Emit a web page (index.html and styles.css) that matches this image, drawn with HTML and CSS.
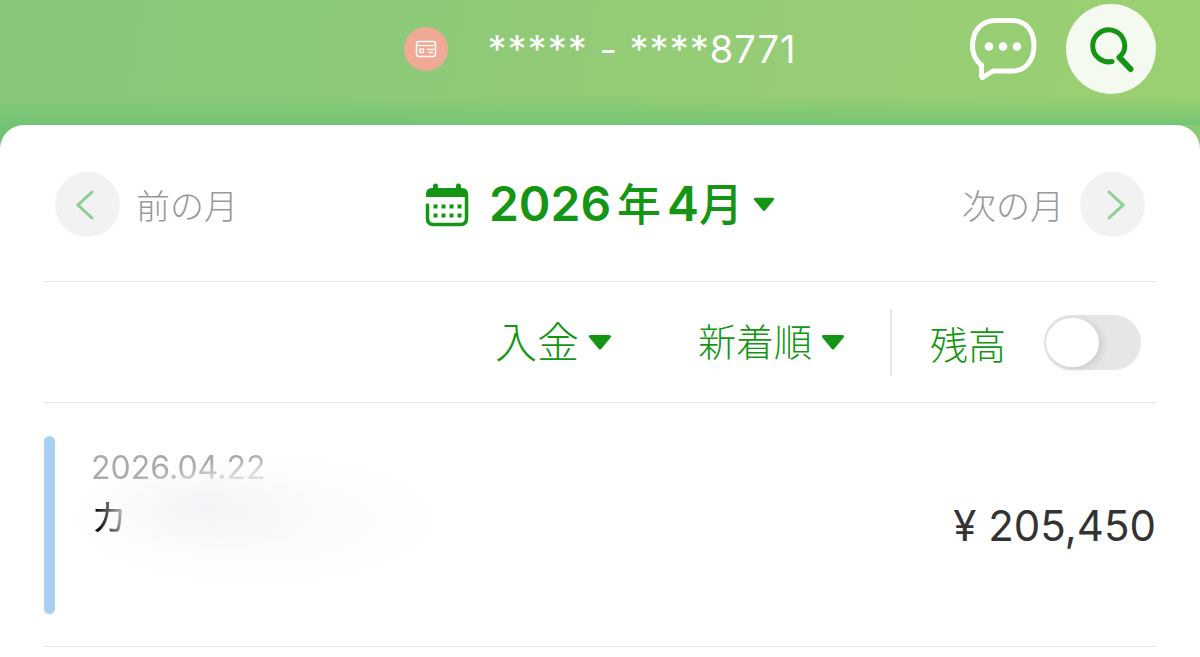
FILE: index.html
```
<!DOCTYPE html>
<html lang="ja">
<head>
  <meta charset="UTF-8">
  <meta name="viewport" content="width=device-width, initial-scale=1.0">
  <title>入出金明細</title>
  <link rel="stylesheet" href="styles.css">
</head>
<body>
  <header class="header">
    <div class="account">
      <span class="account-icon">
        <svg width="22" height="18" viewBox="0 0 22 18" fill="none" stroke="#fff" stroke-width="1.500">
          <rect x="1.500" y="1.500" width="19" height="15" rx="2.500"/>
          <path d="M2 5.500h18" stroke-width="1.200"/>
          <rect x="5" y="9" width="3.500" height="3.500" stroke-width="1.300"/>
          <path d="M12 9.500h7M13.500 12.500h4.500" stroke-width="1.300"/>
        </svg>
      </span>
      <span class="account-number">***** - ****8771</span>
    </div>
    <div class="header-actions">
      <button class="chat-button" aria-label="チャット">
        <svg width="68" height="64" viewBox="0 0 68 64">
          <path d="M27 3.500H43C56 3.500 65 13 65 28.500S56 54 43 54H24L14.500 60Q12.500 61.500 12.500 59V48C6 43 3.500 37 3.500 29C3.500 13 13 3.500 27 3.500Z" fill="none" stroke="#fff" stroke-width="5" stroke-linejoin="round"/>
          <g fill="#fff"><circle cx="20" cy="29.500" r="4.300"/><circle cx="34" cy="29.500" r="4.300"/><circle cx="48" cy="29.500" r="4.300"/></g>
        </svg>
      </button>
      <button class="search-button" aria-label="検索">
        <svg width="90" height="90" viewBox="0 0 90 90" fill="none" stroke="#149614" stroke-width="5" stroke-linecap="round" stroke-linejoin="round">
          <path d="M46 57.500A16 16 0 1 1 57.500 48L53.500 53.500"/>
          <path d="M53.500 53.500L64.500 65" stroke-width="6"/>
        </svg>
      </button>
    </div>
  </header>

  <main class="sheet">
    <nav class="month-nav">
      <button class="month-step">
        <span class="circle">
          <svg width="24" height="30" viewBox="0 0 24 30"><path d="M16 2L2 15L16 28"/></svg>
        </span>
        前の月
      </button>
      <button class="month-current" aria-haspopup="listbox">
        <svg class="calendar" width="44" height="44" viewBox="0 0 44 44">
          <path d="M1 14V11Q1 5 7 5H8V3a2.500 2.500 0 0 1 5 0V5H31V3a2.500 2.500 0 0 1 5 0V5H37Q43 5 43 11V14Z" fill="#149614"/>
          <path d="M2.500 22V35.500Q2.500 41.500 8.500 41.500H35.500Q41.500 41.500 41.500 35.500V12" fill="none" stroke="#149614" stroke-width="3.500" stroke-linecap="round"/>
          <path d="M8.500 23.500h28M8.500 32.500h28" stroke="#149614" stroke-width="4" stroke-dasharray="4 4"/>
        </svg>
        <span class="month-text">2026<span class="unit">年</span>4<span class="unit">月</span></span>
        <svg class="caret" width="22" height="15" viewBox="0 0 24 15"><path d="M2.500 1.500H21.500L12 13Z"/></svg>
      </button>
      <button class="month-step next">
        次の月
        <span class="circle">
          <svg width="24" height="30" viewBox="0 0 24 30"><path d="M8 2L22 15L8 28"/></svg>
        </span>
      </button>
    </nav>

    <div class="filters">
      <label class="filter filter-type">
        <select aria-label="種別"><option>入金</option></select>
        <svg class="caret" width="24" height="15" viewBox="0 0 24 15"><path d="M2.500 1.500H21.500L12 13Z"/></svg>
      </label>
      <label class="filter filter-order">
        <select aria-label="並び順"><option>新着順</option></select>
        <svg class="caret" width="24" height="15" viewBox="0 0 24 15"><path d="M2.500 1.500H21.500L12 13Z"/></svg>
      </label>
      <label class="balance">
        残高
        <input class="switch" type="checkbox" role="switch">
      </label>
    </div>

    <article class="entry">
      <span class="entry-bar"></span>
      <div class="entry-info">
        <time class="entry-date" datetime="2026-04-22">2026.04.22</time>
        <div class="entry-name">カ</div>
      </div>
      <div class="entry-amount">¥ 205,450</div>
    </article>
  </main>
</body>
</html>
```
FILE: styles.css
```
* {
  margin: 0;
  padding: 0;
  box-sizing: border-box;
}

body {
  display: flex;
  flex-direction: column;
  min-height: 100vh;
  font-family: Inter, 'Noto Sans CJK JP', sans-serif;
  color: #333;
  background: linear-gradient(100deg, #70c274 0%, #84c873 50%, #8bcb72 100%);
}

button,
select {
  font: inherit;
  color: inherit;
  background: none;
  border: 0;
  appearance: none;
}

svg {
  display: block;
  flex: none;
}

/* header */
.header {
  display: grid;
  grid-template-columns: 1fr auto 1fr;
  align-items: center;
  padding: 4px 44px 31px;
  background:
    linear-gradient(to top, rgba(112, 197, 116, 0.9), rgba(125, 200, 115, 0) 28px),
    linear-gradient(100deg, #88c77b 0%, #8bc979 30%, #93cb77 50%, #9bd071 100%);
}

.account {
  grid-column: 2;
  display: flex;
  align-items: center;
  gap: 40px;
}

.account-icon {
  display: flex;
  align-items: center;
  justify-content: center;
  width: 44px;
  height: 44px;
  border-radius: 50%;
  background: #f0a994;
}

.account-number {
  font-size: 38px;
  letter-spacing: 1px;
  color: #fff;
}

.header-actions {
  display: flex;
  align-items: center;
  justify-content: flex-end;
  gap: 29px;
}

.search-button {
  border-radius: 50%;
  background: #f5faf1;
}

/* white sheet */
.sheet {
  flex: 1;
  padding: 0 44px;
  border-radius: 24px 24px 0 0;
  background: #fff;
}

.month-nav {
  display: grid;
  grid-template-columns: 1fr auto 1fr;
  align-items: center;
  padding: 47px 11px 44px;
  border-bottom: 1px solid #e6e6e6;
}

.month-step {
  display: flex;
  align-items: center;
  gap: 16px;
  font-size: 34px;
  font-weight: 300;
  color: #999;
}

.month-step.next {
  justify-content: flex-end;
}

.circle {
  display: flex;
  align-items: center;
  justify-content: center;
  width: 65px;
  height: 65px;
  border-radius: 50%;
  background: #f2f2f2;
}

.circle path {
  fill: none;
  stroke: #8dd093;
  stroke-width: 3;
  stroke-linecap: round;
}

.month-current {
  display: flex;
  align-items: center;
  gap: 10px;
  color: #149614;
}

.month-text {
  font-size: 48px;
  line-height: 64px;
  font-weight: 600;
}

.calendar {
  margin-right: 10px;
}

.unit {
  margin: 0 6px;
  font-size: 44px;
  font-weight: 500;
}

.unit:last-child {
  margin: 0;
}

.caret {
  fill: #149614;
  stroke: #149614;
  stroke-width: 3;
  stroke-linejoin: round;
}

/* filter row */
.filters {
  display: flex;
  align-items: center;
  justify-content: flex-end;
  padding: 27px 15px;
  border-bottom: 1px solid #e6e6e6;
  color: #149614;
  font-size: 38px;
  font-weight: 300;
}

.filter {
  display: flex;
  align-items: center;
  gap: 8px;
}

.filter-type {
  margin-right: 86px;
  font-size: 42px;
}

.filter-order {
  margin-right: 45px;
}

.balance {
  display: flex;
  align-items: center;
  gap: 38px;
  height: 66px;
  padding-left: 38px;
  border-left: 2px solid #e6e6e6;
}

.switch {
  display: flex;
  align-items: center;
  width: 97px;
  height: 55px;
  padding: 0 2px;
  border-radius: 28px;
  background: #e6e6e7;
  appearance: none;
}

.switch::before {
  content: '';
  width: 53px;
  height: 49px;
  border-radius: 50%;
  background: #fff;
  box-shadow: 3px 2px 8px rgba(0, 0, 0, 0.12);
}

.switch:checked {
  justify-content: flex-end;
  background: #149614;
}

/* entries */
.entry {
  display: flex;
  align-items: center;
  padding: 33px 0 32px;
  border-bottom: 1px solid #e6e6e6;
}

.entry-bar {
  width: 11px;
  height: 178px;
  border-radius: 6px;
  background: #a8d0f0;
}

.entry-info {
  flex: 1;
  align-self: stretch;
  padding: 8px 0 0 36px;
  background:
    radial-gradient(ellipse 120px 46px at 150px 72px, rgba(240, 240, 245, 0.6), transparent),
    radial-gradient(ellipse 200px 72px at 200px 84px, rgba(247, 247, 250, 0.7), transparent);
}

.entry-date,
.entry-name {
  display: block;
  width: max-content;
  color: transparent;
  background-clip: text;
  -webkit-background-clip: text;
}

.entry-date {
  font-size: 32px;
  line-height: 48px;
  background-image: linear-gradient(170deg, #aaa 50%, #ddd 75%);
}

.entry-name {
  font-size: 36px;
  line-height: 52px;
  background-image: linear-gradient(80deg, #111 25%, #bbb 85%);
}

.entry-amount {
  font-size: 42px;
}
```
